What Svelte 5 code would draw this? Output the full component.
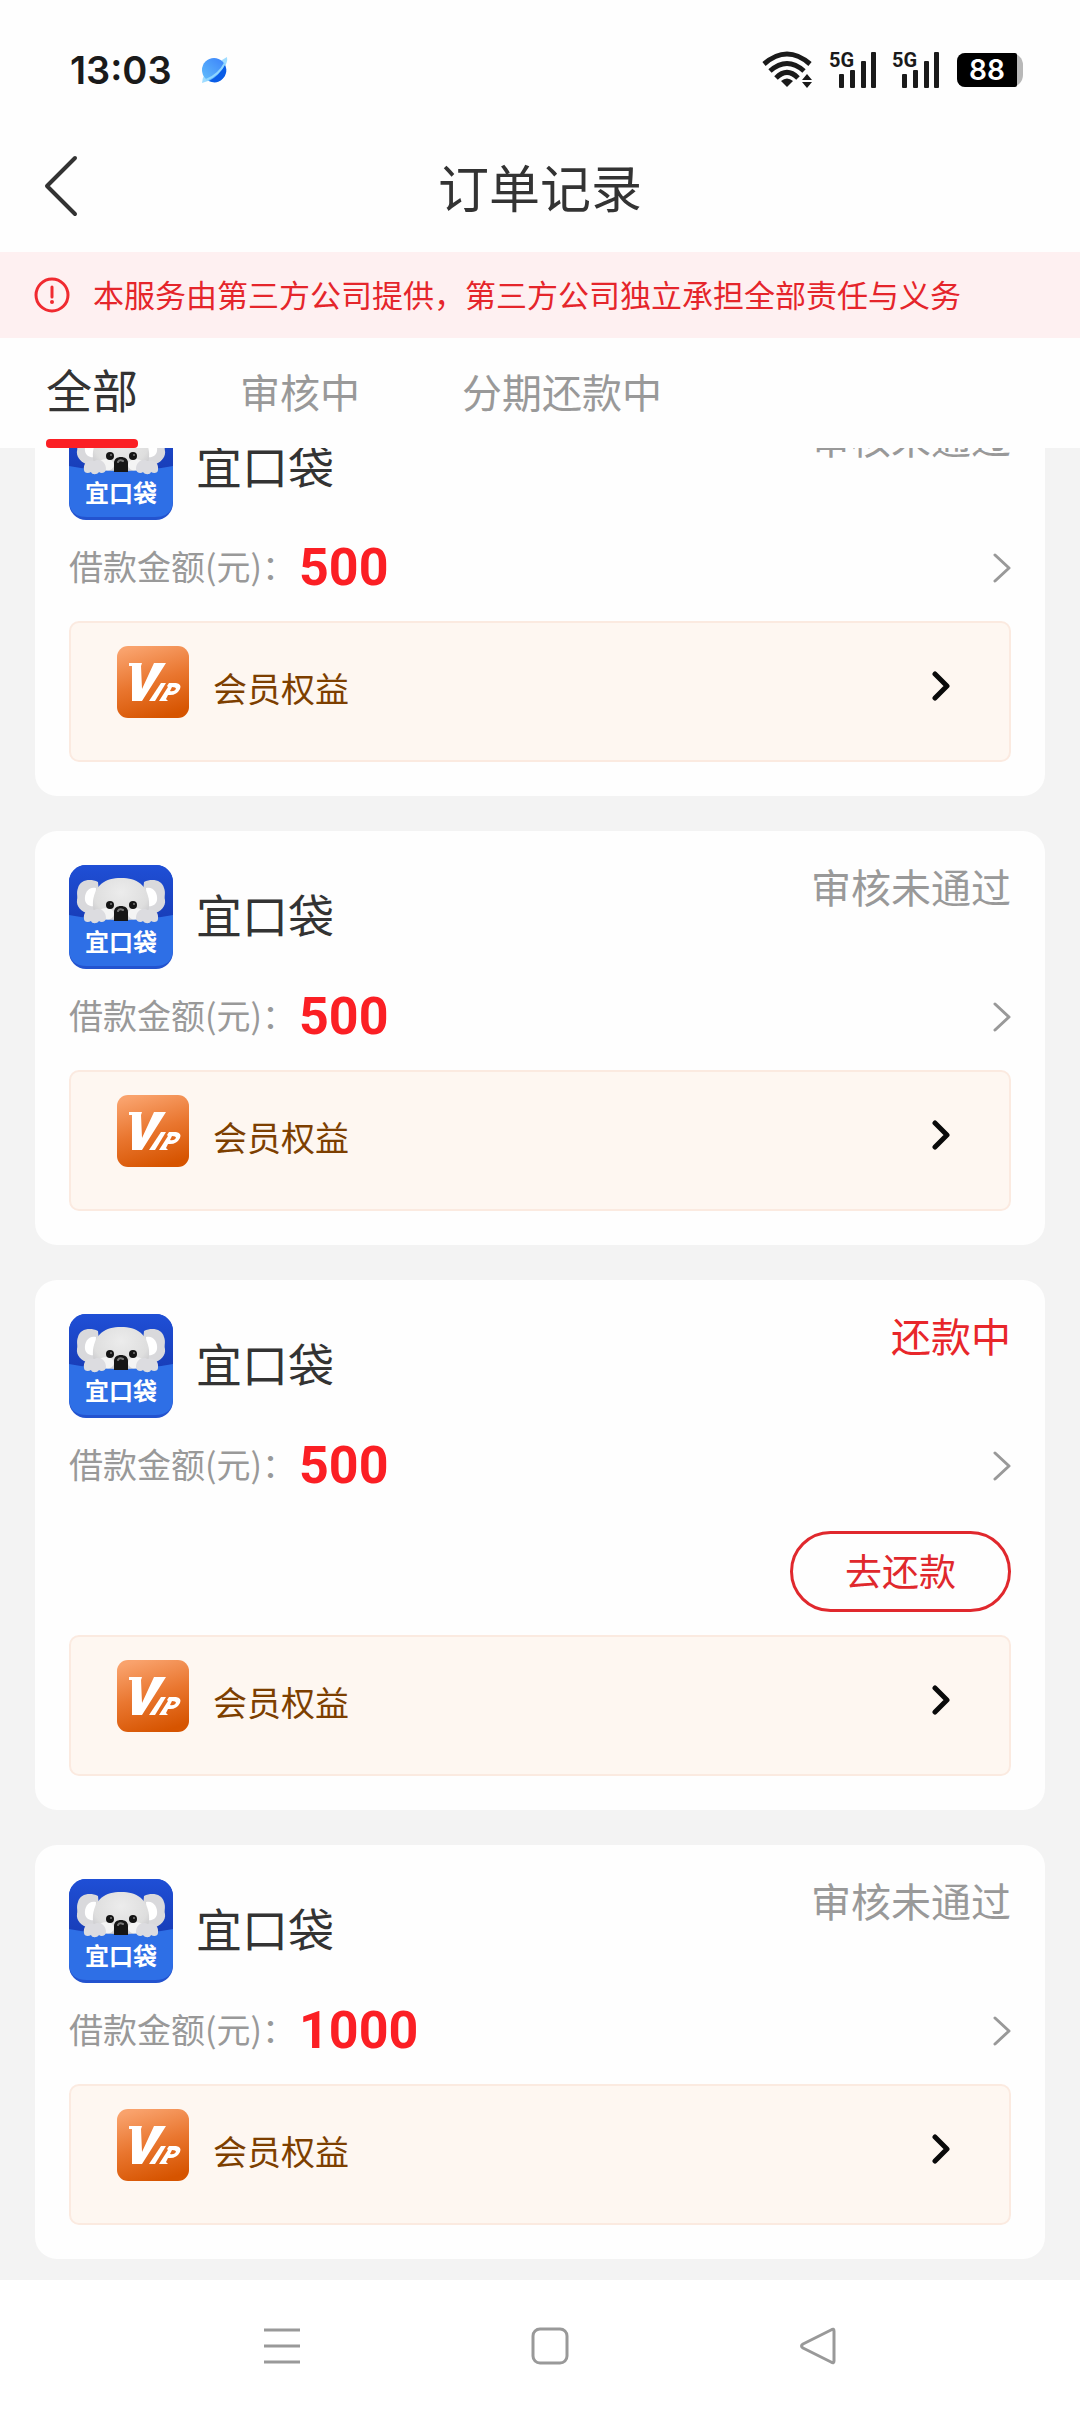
<script>
  const tabs = ['全部', '审核中', '分期还款中'];
  let active = $state(0);

  const orders = [
    { name: '宜口袋', amount: 500, status: '审核未通过' },
    { name: '宜口袋', amount: 500, status: '审核未通过' },
    { name: '宜口袋', amount: 500, status: '还款中', due: true },
    { name: '宜口袋', amount: 1000, status: '审核未通过' }
  ];
</script>

{#snippet signal()}
  <span class="signal">
    <span class="net">5G</span>
    <svg width="48" height="40" viewBox="0 0 48 40" aria-hidden="true">
      <g fill="#1a1a1a">
        <rect x="10" y="24" width="5" height="14" rx="1" />
        <rect x="21" y="20" width="5" height="18" rx="1" />
        <rect x="32" y="11" width="5" height="27" rx="1" />
        <rect x="42" y="2" width="5" height="36" rx="1" />
      </g>
    </svg>
  </span>
{/snippet}

{#snippet logo(id)}
  <svg class="logo" viewBox="0 0 104 104" role="img" aria-label="宜口袋">
    <defs>
      <clipPath id="clip-{id}"><rect width="104" height="104" rx="17" /></clipPath>
      <radialGradient id="fur-{id}" cx="0.5" cy="0.3" r="0.75">
        <stop offset="0" stop-color="#ececec" />
        <stop offset="0.65" stop-color="#dedede" />
        <stop offset="1" stop-color="#bdbdc2" />
      </radialGradient>
      <linearGradient id="back-{id}" x1="0" y1="0" x2="0" y2="1">
        <stop offset="0" stop-color="#1f4fd6" />
        <stop offset="1" stop-color="#173bb4" />
      </linearGradient>
    </defs>
    <g clip-path="url(#clip-{id})">
      <rect width="104" height="104" fill="#2353cf" />
      <rect width="104" height="62" fill="url(#back-{id})" />
      <path d="M29 17C21 13 11 15 9 23C7 28 9 31 8 35C7 41 12 47 20 49L32 48Z" fill="#d9d9dc" />
      <path d="M75 17C83 13 93 15 95 23C97 28 95 31 96 35C97 41 92 47 84 49L72 48Z" fill="#d9d9dc" />
      <path d="M27 23C20 21 15 28 16 35C17 40 21 42 26 41Z" fill="#fff" />
      <path d="M77 23C84 21 89 28 88 35C87 40 83 42 78 41Z" fill="#fff" />
      <path d="M52 13C36 13 26 20 24 36C23 46 27 57 38 60H66C77 57 81 46 80 36C78 20 68 13 52 13Z" fill="url(#fur-{id})" />
      <ellipse cx="37" cy="49" rx="8" ry="6" fill="#f4f4f4" />
      <ellipse cx="67" cy="49" rx="8" ry="6" fill="#f4f4f4" />
      <circle cx="41" cy="40" r="4" fill="#141414" />
      <circle cx="64" cy="40" r="4" fill="#141414" />
      <circle cx="42" cy="39" r="1" fill="#777" />
      <circle cx="65" cy="39" r="1" fill="#777" />
      <path d="M0 50Q52 60 104 50V84Q104 101 86 101H18Q0 101 0 84Z" fill="#2e6fe6" />
      <path d="M45 56V47C45 43 48 41 52 41C56 41 59 43 59 47V56Z" fill="#161616" />
      <path d="M49 46C50 44 52 44 54 45" stroke="#777" stroke-width="2" fill="none" stroke-linecap="round" />
      <path d="M15 54C14 47 19 43 25 45C32 42 37 47 37 53C37 57 32 58 30 56C28 59 23 59 22 56C19 58 15 57 15 54Z" fill="#dcdce0" />
      <path d="M89 54C90 47 85 43 79 45C72 42 67 47 67 53C67 57 72 58 74 56C76 59 81 59 82 56C85 58 89 57 89 54Z" fill="#dcdce0" />
      <text x="52" y="86" text-anchor="middle" class="logo-text">宜口袋</text>
    </g>
  </svg>
{/snippet}

<div class="page">
  <header class="statusbar">
    <div class="left">
      <time>13:03</time>
      <svg width="36" height="36" viewBox="0 0 36 36" aria-hidden="true">
        <defs>
          <linearGradient id="planet" x1="0.8" y1="0" x2="0" y2="0.9">
            <stop offset="0" stop-color="#3d86fb" />
            <stop offset="1" stop-color="#62bdfb" />
          </linearGradient>
        </defs>
        <path d="M26 8L31 5Q32 10 28 16L12 29L6 31Q6 26 9 22Z" fill="#9fdcff" />
        <circle cx="18" cy="18" r="12" fill="url(#planet)" />
        <path d="M29 13A12 12 0 0 1 13 29Q23 24 29 13Z" fill="#0a5ce6" />
        <path d="M29 11Q23 23 10 28" fill="none" stroke="#8fd6ff" stroke-width="2" />
      </svg>
    </div>
    <div class="right">
      <svg width="52" height="40" viewBox="0 0 52 40" aria-hidden="true">
        <g fill="none" stroke="#1a1a1a" stroke-width="5">
          <path d="M2 14Q25 -6 48 14" />
          <path d="M8 21Q25 6 42 21" />
          <path d="M14 28Q25 17 36 28" />
        </g>
        <path d="M19 31Q25 26 31 31L25 37Z" fill="#1a1a1a" />
        <path d="M40 30L45 24L50 30ZM40 32H50L45 38Z" fill="#1a1a1a" />
      </svg>
      {@render signal()}
      {@render signal()}
      <span class="battery"><span class="level">88</span></span>
    </div>
  </header>

  <div class="titlebar">
    <button class="back" aria-label="返回">
      <svg width="36" height="64" viewBox="0 0 36 64" aria-hidden="true">
        <path d="M32 4L4 32L32 60" fill="none" stroke="#333" stroke-width="4" stroke-linecap="round" stroke-linejoin="round" />
      </svg>
    </button>
    <h1>订单记录</h1>
  </div>

  <div class="notice">
    <svg width="36" height="36" viewBox="0 0 36 36" aria-hidden="true">
      <circle cx="18" cy="18" r="16" fill="none" stroke="#f02a30" stroke-width="3" />
      <path d="M18 10V20" stroke="#f02a30" stroke-width="3" stroke-linecap="round" />
      <circle cx="18" cy="25" r="2" fill="#f02a30" />
    </svg>
    <span>本服务由第三方公司提供，第三方公司独立承担全部责任与义务</span>
  </div>

  <nav class="tabs">
    {#each tabs as tab, i}
      <button class="tab" class:active={active === i} onclick={() => (active = i)}>{tab}</button>
    {/each}
  </nav>

  <main>
    <div class="list">
      {#each orders as order, i}
        <article class="card">
          <div class="head">
            {@render logo(i)}
            <h2>{order.name}</h2>
            <span class="status" class:due={order.due}>{order.status}</span>
          </div>
          <a class="amount" href="#order-{i}">
            <span class="label">借款金额(元)：</span>
            <strong>{order.amount}</strong>
            <svg width="18" height="32" viewBox="0 0 18 32" aria-hidden="true">
              <path d="M2 3L16 16L2 29" fill="none" stroke="#999" stroke-width="3" stroke-linecap="round" stroke-linejoin="round" />
            </svg>
          </a>
          {#if order.due}
            <button class="pay">去还款</button>
          {/if}
          <a class="vip" href="#vip-{i}">
            <svg class="badge" viewBox="0 0 72 72" aria-hidden="true">
              <defs>
                <linearGradient id="vip-{i}-fill" x1="0.3" y1="0" x2="0.6" y2="1">
                  <stop offset="0" stop-color="#f9a26c" />
                  <stop offset="0.5" stop-color="#e9762f" />
                  <stop offset="1" stop-color="#d65400" />
                </linearGradient>
              </defs>
              <rect width="72" height="72" rx="11" fill="url(#vip-{i}-fill)" />
              <g fill="#fff">
                <path d="M12 17H25L24 20L25 43L37 17H49L25 55H15V20H12Z" />
                <path d="M44 37H49L38 55H32Z" />
                <path fill-rule="evenodd" d="M52 37H59Q65 38 63 43Q60 49 53 49H51L49 53L51 55H42L51 41L50 40ZM55 41L53 45Q57 46 59 43Q59 41 55 41Z" />
              </g>
            </svg>
            <span class="vip-label">会员权益</span>
            <svg class="go" width="18" height="32" viewBox="0 0 18 32" aria-hidden="true">
              <path d="M3 4L15 16L3 28" fill="none" stroke="#0a0a0a" stroke-width="5" stroke-linecap="round" stroke-linejoin="round" />
            </svg>
          </a>
        </article>
      {/each}
    </div>
  </main>

  <footer class="navbar">
    <button aria-label="最近任务">
      <svg width="40" height="40" viewBox="0 0 40 40" aria-hidden="true">
        <path d="M2 4H38M2 20H38M2 36H38" stroke="#999" stroke-width="3" />
      </svg>
    </button>
    <button aria-label="主屏幕">
      <svg width="40" height="40" viewBox="0 0 40 40" aria-hidden="true">
        <rect x="3" y="3" width="34" height="34" rx="7" fill="none" stroke="#999" stroke-width="3" />
      </svg>
    </button>
    <button aria-label="返回上一页">
      <svg width="40" height="40" viewBox="0 0 40 40" aria-hidden="true">
        <path d="M36 5V35Q36 38 33 36L5 22Q2 20 5 18L33 4Q36 2 36 5Z" fill="none" stroke="#999" stroke-width="3" stroke-linejoin="round" />
      </svg>
    </button>
  </footer>
</div>

<style>
  :global(body) {
    background: #f3f3f3;
    font-family: 'Noto Sans CJK SC', sans-serif;
    color: #333;
  }

  button {
    background: none;
    border: 0;
    padding: 0;
    font: inherit;
    color: inherit;
    cursor: pointer;
  }

  a {
    color: inherit;
    text-decoration: none;
  }

  svg {
    display: block;
    flex: none;
  }

  h1,
  h2 {
    margin: 0;
    font-weight: 400;
  }

  .page {
    display: flex;
    flex-direction: column;
    height: 100vh;
  }

  .statusbar {
    display: flex;
    justify-content: space-between;
    align-items: center;
    height: 140px;
    padding: 0 57px 0 70px;
    background: #fefefe;
  }

  .left,
  .right {
    display: flex;
    align-items: center;
  }

  .left {
    gap: 24px;
  }

  time {
    font: 600 38px/1 Inter, sans-serif;
    color: #1a1a1a;
  }

  .right {
    gap: 15px;
  }

  .signal {
    position: relative;
  }

  .net {
    position: absolute;
    left: 0;
    top: 0;
    font: 700 20px/20px Roboto, sans-serif;
    color: #1a1a1a;
  }

  .battery {
    display: flex;
    margin-left: 2px;
    padding-right: 6px;
    border-radius: 8px 12px 12px 8px;
    background: #b8b8b8;
  }

  .level {
    width: 60px;
    border-radius: 8px 2px 2px 8px;
    background: #000;
    color: #fff;
    font: 600 28px/34px Inter, sans-serif;
    text-align: center;
  }

  .titlebar {
    display: grid;
    grid-template-columns: 1fr auto 1fr;
    align-items: center;
    height: 112px;
    padding: 0 43px 20px;
    box-sizing: border-box;
    background: #fefefe;
  }

  .back {
    justify-self: start;
  }

  h1 {
    font-size: 51px;
    line-height: 64px;
  }

  .notice {
    display: flex;
    align-items: center;
    gap: 23px;
    height: 86px;
    padding: 0 34px;
    background: #fef0f1;
    color: #e5252b;
    font-size: 31px;
    line-height: 46px;
  }

  .notice span {
    padding-bottom: 3px;
  }

  .tabs {
    display: flex;
    align-items: stretch;
    gap: 102px;
    height: 110px;
    padding: 0 46px;
    background: #fefefe;
  }

  .tab {
    padding-bottom: 5px;
    color: #999;
    font-size: 40px;
  }

  .tab.active {
    position: relative;
    padding-bottom: 10px;
    color: #333;
    font-size: 46px;
  }

  .tab.active::after {
    content: '';
    position: absolute;
    inset: auto 0 0;
    height: 9px;
    border-radius: 4px;
    background: #fb1f24;
  }

  main {
    flex: 1;
    min-height: 0;
    overflow: hidden;
  }

  /* The list rests scrolled a little way under the tabs. */
  .list {
    display: flex;
    flex-direction: column;
    gap: 35px;
    margin-top: -66px;
    padding: 0 35px 35px;
  }

  .card {
    padding: 34px;
    border-radius: 22px;
    background: #fefefe;
  }

  .head {
    display: flex;
    align-items: center;
    gap: 23px;
  }

  .logo {
    width: 104px;
    height: 104px;
  }

  .logo-text {
    font-size: 24px;
    font-weight: 700;
    fill: #fff;
  }

  h2 {
    padding-bottom: 8px;
    font-size: 46px;
    line-height: 64px;
  }

  .status {
    align-self: flex-start;
    margin-left: auto;
    color: #999;
    font-size: 40px;
    line-height: 42px;
  }

  .status.due {
    color: #e8262a;
  }

  .amount {
    display: flex;
    align-items: center;
    height: 66px;
    margin-top: 15px;
  }

  .amount svg {
    margin-left: auto;
  }

  .label {
    padding: 0 3px 5px 0;
    color: #999;
    font-size: 34px;
  }

  strong {
    color: #fb1f24;
    font: 700 52px/64px Roboto, sans-serif;
  }

  .pay {
    display: block;
    width: 221px;
    margin: 32px 0 23px auto;
    padding-bottom: 3px;
    border: 3px solid #e0282d;
    border-radius: 41px;
    color: #e0282d;
    font-size: 37px;
    line-height: 72px;
  }

  .vip {
    display: flex;
    align-items: flex-start;
    margin-top: 20px;
    padding: 23px 59px 42px 46px;
    border: 2px solid #fbeae0;
    border-radius: 10px;
    background: #fef7f1;
  }

  .pay + .vip {
    margin-top: 0;
  }

  .badge {
    width: 72px;
    height: 72px;
  }

  .vip-label {
    flex: 1;
    padding: 19px 0 0 24px;
    color: #7d3f00;
    font-size: 34px;
    line-height: 46px;
  }

  .go {
    margin-top: 24px;
  }

  .navbar {
    display: flex;
    justify-content: center;
    gap: 228px;
    padding: 46px 0 46px 20px;
    background: #fff;
  }
</style>
